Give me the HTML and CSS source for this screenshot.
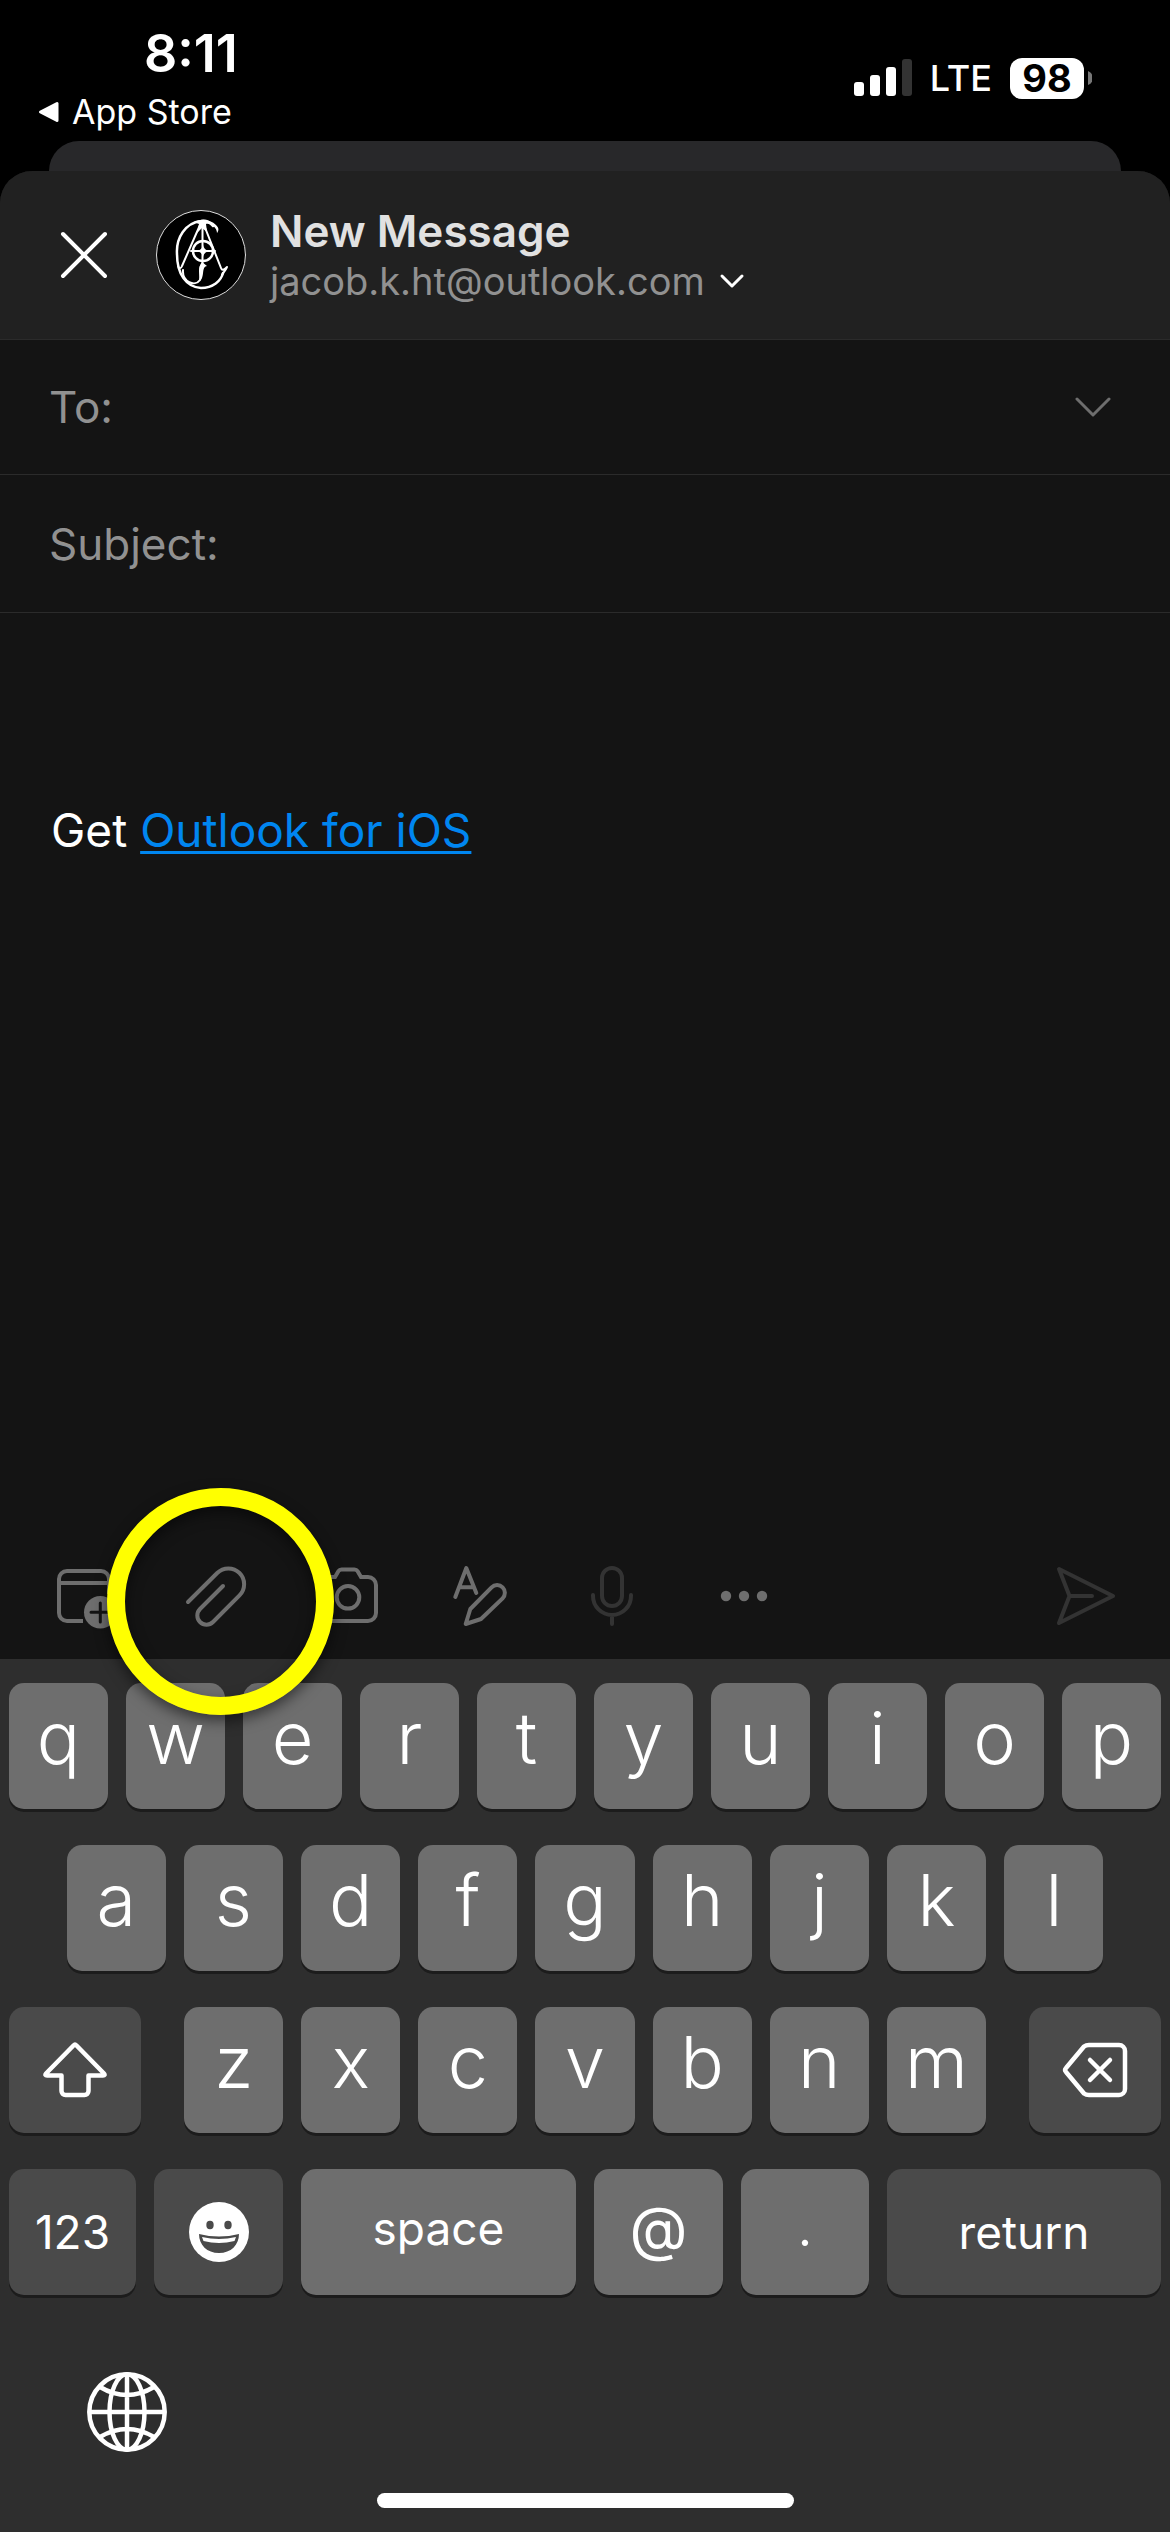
FILE: index.html
```html
<!DOCTYPE html>
<html lang="en">
<head>
<meta charset="utf-8">
<meta name="viewport" content="width=device-width, initial-scale=1">
<title>New Message</title>
<link rel="stylesheet" href="styles.css">
</head>
<body>
<header class="status">
  <div class="status-left">
    <time class="clock">8:11</time>
    <a class="back" href="#"><svg width="21" height="22" viewBox="0 0 21 22"><path d="M2.500 11 19 2.500v17z" fill="#fff" stroke="#fff" stroke-width="3" stroke-linejoin="round"/></svg>App Store</a>
  </div>
  <div class="status-right">
    <svg width="58" height="38" viewBox="0 0 58 38" fill="#fff"><rect y="23" width="10" height="14" rx="3"/><rect x="16" y="16" width="10" height="21" rx="3"/><rect x="32" y="8" width="10" height="29" rx="3"/><rect x="48" width="10" height="37" rx="3" fill="#333"/></svg>
    <span class="network">LTE</span>
    <span class="battery"><span class="level">98</span><svg width="4" height="14" viewBox="0 0 4 14"><path d="M0 0a7.500 7.500 0 0 1 0 14z" fill="#777"/></svg></span>
  </div>
</header>
<div class="behind"></div>
<main class="sheet">
  <div class="topbar">
    <button class="close" aria-label="Close"><svg width="48" height="48" viewBox="0 0 48 48" fill="none" stroke="#fff" stroke-width="4" stroke-linecap="round"><path d="m3 3 42 42M45 3 3 45"/></svg></button>
    <svg class="avatar" width="90" height="90" viewBox="0 0 90 90" fill="none" stroke="#fff" stroke-linecap="round" stroke-linejoin="round">
      <circle cx="45" cy="45" r="44.500" fill="#000" stroke="#ddd"/>
      <path stroke-width="2.500" d="M57 16C53 11 49 10 45 11 29 13 20 28 21 44c0 20 9 33 24 34 12 0 20-7 22-15"/>
      <path stroke-width="2" d="M22 56c1 3 3 3 4 0L44 15M48 15l17 43c1 3 3 2 6-1-1 3-3 4-5 8M27 60c-1 12 12 17 17 10 3-5-1-10 1-14"/>
      <path fill="#fff" stroke="none" d="M38 12c8-4 17-2 22 3 3 3 3 5 1 8 0-5-6-10-11-9l1 8-5-4-5 5 2-9zM46 52l5 4c-5 1-3 7-5 12l-3 3c1-7-2-13 3-19z"/>
      <circle cx="47" cy="41" r="10" stroke-width="2.500"/>
      <path stroke-width="2" d="M46.500 15v40M35 41h24"/><path fill="#fff" stroke="none" d="M47 35q1 5 6 6-5 1-6 6-1-5-6-6 5-1 6-6z"/>
    </svg>
    <div class="heading">
      <h1>New Message</h1>
      <button class="account">jacob.k.ht@outlook.com<svg width="26" height="16" viewBox="0 0 26 16" fill="none" stroke="#fff" stroke-width="3" stroke-linecap="round" stroke-linejoin="round"><path d="m3 3 10 10L23 3"/></svg></button>
    </div>
  </div>
  <div class="field">
    <label for="to">To:</label><input id="to" type="text">
    <button aria-label="Show more fields"><svg width="36" height="21" viewBox="0 0 36 21" fill="none" stroke="#6e6e6e" stroke-width="3" stroke-linecap="round" stroke-linejoin="round"><path d="m2 2 16 16L34 2"/></svg></button>
  </div>
  <div class="field"><label for="subject">Subject:</label><input id="subject" type="text"></div>
  <div class="message">Get <a href="#">Outlook for iOS</a></div>
  <div class="toolbar">
    <button class="tool" aria-label="Add event"><svg width="72" height="72" viewBox="0 0 72 72" fill="none" stroke="#6e6e6e" stroke-width="4"><path d="M61 34V19a8 8 0 0 0-8-8H19a8 8 0 0 0-8 8v34a8 8 0 0 0 8 8h16M11 23h50"/><circle cx="52.300" cy="52.300" r="18.500" fill="#141414" stroke="none"/><circle cx="52.300" cy="52.300" r="16.300" fill="#6e6e6e" stroke="none"/><path stroke="#141414" stroke-width="3" stroke-linecap="round" d="M52.300 43v19M43 52.300h19"/></svg></button>
    <button class="tool attach" aria-label="Attach file"><svg width="72" height="72" viewBox="0 0 72 72" fill="none" stroke="#6e6e6e" stroke-width="4" stroke-linecap="round"><path d="m8 42 29.200-29A15.700 15.700 0 0 1 59.500 35.300L33 62a9 9 0 0 1-13-13l23-23"/></svg><span class="ring"></span></button>
    <button class="tool" aria-label="Take photo"><svg width="72" height="72" viewBox="0 0 72 72" fill="none" stroke="#6e6e6e" stroke-width="4"><path d="M8 25a8 8 0 0 1 8-8h7l3.500-6q1-1.600 3-1.600h13q2 0 3 1.600L49 17h7a8 8 0 0 1 8 8v28a8 8 0 0 1-8 8H16a8 8 0 0 1-8-8z"/><circle cx="36" cy="37.300" r="11.300"/></svg></button>
    <button class="tool" aria-label="Format text"><svg width="72" height="72" viewBox="0 0 72 72" fill="none" stroke="#6e6e6e" stroke-width="4" stroke-linecap="round" stroke-linejoin="round"><path d="M11.300 37 22.300 8l10 25M15.500 27.300h14M21.700 64l4.600-15 21.300-21.700a7.600 7.600 0 0 1 11 11L37 59z"/></svg></button>
    <button class="tool" aria-label="Dictate" disabled><svg width="72" height="72" viewBox="0 0 72 72" fill="none" stroke="#333" stroke-width="4" stroke-linecap="round"><rect x="26" y="8" width="20" height="38" rx="10"/><path d="M17 35v1a19 19 0 0 0 38 0v-1M36 55v9"/></svg></button>
    <button class="tool" aria-label="More"><svg width="72" height="72" viewBox="0 0 72 72" fill="#6e6e6e"><circle cx="18" cy="36" r="5.200"/><circle cx="36" cy="36" r="5.200"/><circle cx="54" cy="36" r="5.200"/></svg></button>
    <button class="send" aria-label="Send" disabled><svg width="72" height="72" viewBox="0 0 72 72" fill="none" stroke="#333" stroke-width="4" stroke-linecap="round" stroke-linejoin="round"><path d="M9 9l54 27L9 63l10.500-27zM19.500 36H42"/></svg></button>
  </div>
</main>
<section class="keyboard" aria-label="Keyboard">
  <div class="row top"><button>q</button><button>w</button><button>e</button><button>r</button><button>t</button><button>y</button><button>u</button><button>i</button><button>o</button><button>p</button></div>
  <div class="row home"><button>a</button><button>s</button><button>d</button><button>f</button><button>g</button><button>h</button><button>j</button><button>k</button><button>l</button></div>
  <div class="row lower">
    <button class="dark" aria-label="Shift"><svg width="64" height="56" viewBox="0 0 64 56" fill="none" stroke="#fff" stroke-width="4.500" stroke-linejoin="round"><path d="M30.500 3.500 3 31.500q-1.500 2 1 2h14.500V49a4 4 0 0 0 4 4h19a4 4 0 0 0 4-4V33.500H60q2.500 0 1-2L33.500 3.500q-1.500-1.500-3 0z"/></svg></button>
    <div class="letters"><button>z</button><button>x</button><button>c</button><button>v</button><button>b</button><button>n</button><button>m</button></div>
    <button class="dark" aria-label="Delete"><svg width="66" height="56" viewBox="0 0 66 56" fill="none" stroke="#fff" stroke-width="4.500" stroke-linecap="round" stroke-linejoin="round"><path d="M22 4.500Q24 3 27 3h30a6 6 0 0 1 6 6v38a6 6 0 0 1-6 6H27q-3 0-5-1.500L4 30q-2-2 0-4zM28 18l20 20M48 18 28 38"/></svg></button>
  </div>
  <div class="row bottom">
    <button class="dark word">123</button>
    <button class="dark" aria-label="Emoji"><svg width="60" height="60" viewBox="0 0 60 60"><circle cx="30" cy="30" r="30" fill="#fff"/><g fill="#4a4a4a"><ellipse cx="21" cy="23" rx="3.700" ry="4.200"/><ellipse cx="39" cy="23" rx="3.700" ry="4.200"/><path d="M10 32q20 5 40 0c0 11-8 19-20 19s-20-8-20-19z"/></g><path d="M13 35q17 4 34 0l-1.500 4q-15.500 4-31 0z" fill="#fff"/></svg></button>
    <button class="word space">space</button><button class="at">@</button><button class="dot">.</button><button class="dark word">return</button>
  </div>
  <div class="dock"><button aria-label="Next keyboard"><svg width="80" height="80" viewBox="0 0 80 80" fill="none" stroke="#fff" stroke-width="4.500"><circle cx="40" cy="40" r="37.700"/><ellipse cx="40" cy="40" rx="17.500" ry="37.700"/><path d="M40 2v76M2 40h76M13 15q27 16 54 0M13 65q27-16 54 0"/></svg></button></div>
  <div class="indicator"></div>
</section>
</body>
</html>
```
FILE: styles.css
```css
* { box-sizing: border-box; }
body { margin: 0; min-height: 100vh; display: flex; flex-direction: column; background: #000; color: #fff; font-family: Inter, "Liberation Sans", sans-serif; }
button, input { margin: 0; padding: 0; border: 0; background: none; color: inherit; font: inherit; }
svg { display: block; flex: none; }

.status { height: 141px; display: flex; justify-content: space-between; }
.status-left { padding: 24px 0 0 38px; }
.clock { display: block; padding-left: 106px; font-size: 52px; line-height: 60px; font-weight: 600; }
.back { display: flex; align-items: center; gap: 13px; margin-top: 8px; font-size: 34px; line-height: 40px; font-weight: 400; color: #fff; text-decoration: none; }
.status-right { height: 156px; display: flex; align-items: center; gap: 18px; padding-right: 78px; }
.network { font-size: 36px; font-weight: 500; }
.battery { display: flex; align-items: center; gap: 4px; }
.level { width: 74px; height: 41px; border-radius: 12px; background: #fff; color: #000; font-size: 38px; line-height: 41px; font-weight: 700; text-align: center; }

.behind { height: 30px; margin: 0 49px; border-radius: 30px 30px 0 0; background: #28282a; }
.sheet { flex: 1; display: flex; flex-direction: column; background: #141414; border-radius: 32px 32px 0 0; }
.topbar { height: 169px; display: flex; align-items: center; border-bottom: 1px solid #2b2b2b; border-radius: 32px 32px 0 0; background: #212121; padding-left: 60px; }
.close { margin-right: 48px; }
.heading { margin-left: 24px; }
h1 { margin: 0; font-size: 44px; line-height: 52px; font-weight: 600; color: #e1e1e1; }
.account { display: flex; align-items: center; gap: 14px; font-size: 38px; line-height: 48px; color: #919191; }

.field { display: flex; align-items: center; height: 135px; border-bottom: 1px solid #2b2b2b; padding: 0 59px 0 49px; font-size: 44px; color: #919191; }
.field + .field { height: 138px; }
.field input { flex: 1; min-width: 0; margin-left: 12px; height: 60px; color: #fff; outline: none; }
.message { flex: 1; padding: 188px 51px 0; font-size: 46px; line-height: 58px; }
.message a { color: #0086f0; text-decoration-thickness: 3px; text-underline-offset: 4px; }

.toolbar { height: 126px; display: flex; align-items: center; padding: 0 48px 0 18px; }
.tool { width: 132px; display: flex; justify-content: center; }
.send { margin-left: auto; }
.attach { position: relative; }
.ring { position: absolute; z-index: 1; left: -43px; top: -72px; width: 227px; height: 227px; border: 18px solid #ff0; border-radius: 50%; box-shadow: 0 6px 14px rgba(0, 0, 0, .5), inset 0 6px 14px rgba(0, 0, 0, .5); }

.keyboard { background: #2e2e2e; padding: 24px 9px; display: flex; flex-direction: column; }
.row { display: grid; gap: 18px; height: 126px; margin-bottom: 36px; }
.row button { display: flex; align-items: center; justify-content: center; height: 126px; min-width: 0; border-radius: 15px; background: #6e6e6e; box-shadow: 0 3px 0 #1c1c1c; font-size: 72px; line-height: 72px; font-weight: 350; padding-bottom: 16px; }
.row .dark { background: #4a4a4a; padding: 0; }
.row .word { font-size: 46px; font-weight: 400; }
.row .space { padding-bottom: 8px; }
.row .at { font-size: 60px; font-weight: 400; padding-bottom: 8px; }
.row .dot { font-size: 60px; }
.top { grid-template-columns: repeat(10, 1fr); }
.home { grid-template-columns: repeat(9, 1fr); padding: 0 5%; }
.lower { grid-template-columns: 132fr 801fr 132fr; gap: 43px; }
.letters { display: grid; grid-template-columns: repeat(7, 1fr); gap: 18px; }
.bottom { grid-template-columns: 127fr 129fr 275fr 129fr 128fr 274fr; }
.dock { display: flex; padding: 41px 0 0 78px; }
.indicator { width: 417px; height: 15px; border-radius: 8px; background: #fff; margin: 41px auto 0; }
```
